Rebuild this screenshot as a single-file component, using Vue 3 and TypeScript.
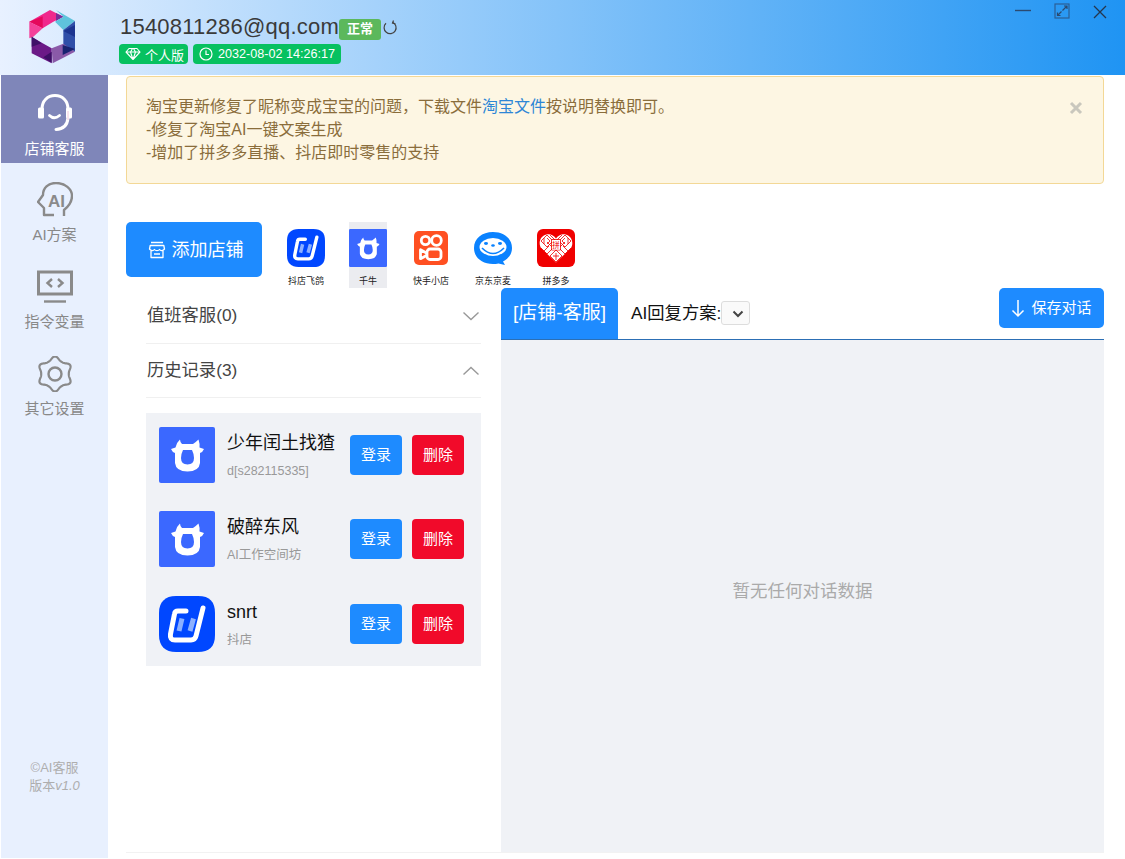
<script setup lang="ts">
const gearPath = (() => {
  const pts: string[] = []
  for (let i = 0; i < 120; i++) {
    const t = (i / 120) * Math.PI * 2
    const r = 15.4 + 1.9 * Math.cos(6 * t) + 0.3 * Math.cos(12 * t)
    pts.push(`${(18 + r * Math.sin(t)).toFixed(2)} ${(18 - r * Math.cos(t)).toFixed(2)}`)
  }
  return 'M' + pts.join('L') + 'Z'
})()

const navItems = [
  { key: 'kefu', label: '店铺客服', active: true },
  { key: 'ai', label: 'AI方案', active: false },
  { key: 'cmd', label: '指令变量', active: false },
  { key: 'gear', label: '其它设置', active: false },
]

const platforms = [
  { key: 'dd', label: '抖店飞鸽', icon: '#i-dd', cls: 'p-dd', active: false },
  { key: 'qn', label: '千牛', icon: '#i-qn', cls: 'p-qn', active: true },
  { key: 'ks', label: '快手小店', icon: '#i-ks', cls: 'p-ks', active: false },
  { key: 'jd', label: '京东京麦', icon: '#i-jd', cls: 'p-jd', active: false },
  { key: 'pdd', label: '拼多多', icon: '#i-pdd', cls: 'p-pdd', active: false },
]

const history = [
  { name: '少年闰土找猹', sub: 'd[s282115335]', icon: '#i-qn', h: 84 },
  { name: '破醉东风', sub: 'AI工作空间坊', icon: '#i-qn', h: 85 },
  { name: 'snrt', sub: '抖店', icon: '#i-dd', h: 70 },
]
</script>

<template>
  <div class="page">
    <svg class="defs" width="0" height="0" aria-hidden="true">
      <symbol id="i-dd" viewBox="0 0 56 56">
        <path d="M17 0H39C51 0 56 6 56 17V39C56 51 50 56 39 56H17C6 56 0 50 0 39V17C0 6 6 0 17 0Z" fill="#0047ff" />
        <path d="M27 15H19Q16 15 15.500 18L11.500 38Q10.500 44 16 44H32Q36 44 37 40L44 12" fill="none" stroke="#fff" stroke-width="5" stroke-linecap="round" stroke-linejoin="round" />
        <path d="M23 22.500L20 35M34.500 22.500L31 35" fill="none" stroke="#8cb0ff" stroke-width="5" />
      </symbol>
      <symbol id="i-qn" viewBox="0 0 56 56">
        <rect width="56" height="56" rx="2" fill="#3b68ff" />
        <path fill="#fff" fill-rule="evenodd" d="M21 12.500Q21 15 23 17H34Q37 15 39.500 12.500Q41 17 40.500 20.500L45 22Q43.500 25.500 41 26V36Q40 44.500 28.500 44.500Q17 44.500 16 36V26Q13.500 25.500 12 22L16.500 20.500Q17.500 15.500 21 12.500ZM24 23Q22 27 22 31Q22 37.500 28.500 37.500Q35 37.500 35 31Q35 27 33 23Z" />
      </symbol>
      <symbol id="i-ks" viewBox="0 0 34 34">
        <rect width="34" height="34" rx="5" fill="#ff5022" />
        <g fill="none" stroke="#fff" stroke-width="2.800">
          <circle cx="11.500" cy="9.500" r="4.200" />
          <circle cx="22.500" cy="9.500" r="4.800" />
          <rect x="13" y="18" width="14" height="10.500" rx="3" />
          <path d="M12.500 22L6.500 18.800V27.700L12.500 24.500" stroke-linejoin="round" />
        </g>
      </symbol>
      <symbol id="i-jd" viewBox="0 0 38 38">
        <path d="M19 3C30 3 38 9.500 38 19C38 25 34.500 30 29 32.500L31 36L24.500 34.500C22.500 35 21 35 19 35C8 35 0 28.500 0 19C0 9.500 8 3 19 3Z" fill="#0a82ff" />
        <ellipse cx="19" cy="18" rx="13.500" ry="9" fill="#fff" />
        <ellipse cx="12" cy="14.500" rx="2" ry="1.400" fill="#0a82ff" />
        <ellipse cx="26" cy="14.500" rx="2" ry="1.400" fill="#0a82ff" />
        <ellipse cx="19" cy="16.500" rx="1.800" ry="1.200" fill="#0a82ff" />
        <path d="M8 19Q19 30 30 19" fill="none" stroke="#0a82ff" stroke-width="1.600" />
      </symbol>
      <symbol id="i-pdd" viewBox="0 0 38 38">
        <rect width="38" height="38" rx="6" fill="#f00000" />
        <path d="M19 33.500L4.500 19.500C1 15.500 2.500 7 9.500 5.500C13.500 4.800 17 6.500 19 9.500C21 6.500 24.500 4.800 28.500 5.500C35.500 7 37 15.500 33.500 19.500Z" fill="#fff" />
        <g fill="none" stroke="#f00000" stroke-width="0.800">
          <path d="M4 12L10 6L16 12L10 18ZM22 12L28 6L34 12L28 18ZM4 19L10 25L16 19L10 13M34 19L28 25L22 19L28 13M13 27L19 21L25 27L19 33Z" />
          <path d="M7 9V15M31 9V15M10 9L13 12L10 15M28 9L25 12L28 15M7 22L12 17M31 22L26 17M16 27L22 27M19 24V31M13 6L19 12L25 6" />
          <path d="M14.500 10.500H23.500V21H14.500Z" />
        </g>
        <rect x="15" y="11" width="8" height="9.500" fill="#fff" />
        <text x="19" y="19" class="pdd-t">拼</text>
      </symbol>
    </svg>

    <header class="top">
      <div class="logo-cell">
        <svg class="logo" width="66" height="66" viewBox="0 0 198 198">
          <polygon points="28,50 90,15 130,35 100,50 68,70" fill="#f0288c" />
          <polygon points="28,50 68,34 68,70" fill="#e5085c" />
          <polygon points="108,24 130,35 108,48" fill="#7a2a98" />
          <polygon points="28,50 28,100 40,95 68,70" fill="#f4419a" />
          <polygon points="108,15 165,48 130,75 105,50 130,35" fill="#5fc3dc" />
          <polygon points="165,48 165,140 130,120 130,75" fill="#2f4ea8" />
          <polygon points="165,60 165,96 130,78" fill="#1c3490" />
          <polygon points="165,140 98,175 95,130 130,116" fill="#8a5aa8" />
          <polygon points="128,120 165,132 128,150" fill="#18226f" />
          <polygon points="35,95 35,145 95,175 95,130 68,115" fill="#6b1a87" />
          <polygon points="35,95 35,125 65,115" fill="#3f1168" />
          <polygon points="70,157 95,140 95,173" fill="#3e0f66" />
        </svg>
      </div>
      <div class="acct">
        <div class="acct-line">
          <span class="email">1540811286@qq.com</span>
          <span class="ok">正常</span>
          <svg class="refresh" width="16" height="16" viewBox="0 0 16 16">
            <path d="M10.500 2.200A6 6 0 1 1 4 3.300" fill="none" stroke="#444" stroke-width="1.200" />
            <path d="M11.500 0.500L10.500 3.200L13.500 4" fill="none" stroke="#444" stroke-width="1.200" />
          </svg>
        </div>
        <div class="tags">
          <span class="tag tag-a">
            <svg width="16" height="14" viewBox="0 0 16 14">
              <path d="M4 1.500H12L15 5L8 12.500L1 5ZM1 5H15M5.500 5L8 12.500L10.500 5L8.500 1.500H7.500Z" fill="none" stroke="#fff" stroke-width="1.100" stroke-linejoin="round" />
            </svg>
            个人版
          </span>
          <span class="tag tag-b">
            <svg width="14" height="14" viewBox="0 0 14 14">
              <circle cx="7" cy="7" r="6" fill="none" stroke="#fff" stroke-width="1.200" />
              <path d="M7 3.500V7.500H10" fill="none" stroke="#fff" stroke-width="1.200" />
            </svg>
            2032-08-02 14:26:17
          </span>
        </div>
      </div>
      <div class="win">
        <svg width="16" height="16" viewBox="0 0 16 16"><path d="M0 7.500H16" stroke="#2b4a70" stroke-width="1.400" /></svg>
        <svg width="16" height="16" viewBox="0 0 16 16">
          <rect x="1" y="1" width="14" height="14" fill="none" stroke="#2b5f96" stroke-width="1.200" />
          <path d="M8.500 7.500L13 3M10 3H13V6M7.500 8.500L3.500 12.500M3.500 9.500V12.500H6.500" fill="none" stroke="#2b4a70" stroke-width="1.200" />
        </svg>
        <svg width="14" height="14" viewBox="0 0 14 14"><path d="M1 1L13 13M13 1L1 13" stroke="#25364d" stroke-width="1.300" /></svg>
      </div>
    </header>

    <div class="shell">
      <aside class="side">
        <div v-for="item in navItems" :key="item.key" class="nav" :class="{ on: item.active }">
          <svg v-if="item.key === 'kefu'" width="38" height="38" viewBox="0 0 38 38">
            <path d="M6 15C6 7 11.500 1.500 19 1.500C26.500 1.500 32 7 32 15" fill="none" stroke="#fff" stroke-width="3" />
            <rect x="2" y="13.500" width="6" height="11" rx="1.500" fill="#fff" />
            <rect x="30" y="13.500" width="6" height="11" rx="1.500" fill="#fff" />
            <path d="M13.500 21.500Q18 26 23.500 21.500" fill="none" stroke="#fff" stroke-width="2.800" stroke-linecap="round" />
            <path d="M32 24Q31 35 20 35.500" fill="none" stroke="#fff" stroke-width="3" stroke-linecap="round" />
            <path d="M32 17V26" stroke="#f0c8dc" stroke-width="1" />
          </svg>
          <svg v-else-if="item.key === 'ai'" width="36" height="36" viewBox="0 0 36 36">
            <path d="M27 34V28C32 24 35 20 35 14C35 7 28 1 19 1C11 1 6 6 6 13L1 20L7 26V33H17" fill="none" stroke="#8a8a8a" stroke-width="2.400" stroke-linejoin="round" />
            <text x="11" y="25" class="ai-t">AI</text>
          </svg>
          <svg v-else-if="item.key === 'cmd'" width="36" height="36" viewBox="0 0 36 36">
            <rect x="1.500" y="3" width="33" height="22" fill="none" stroke="#8a8a8a" stroke-width="3" />
            <path d="M15 10L10.500 14L15 18M21 10L25.500 14L21 18" fill="none" stroke="#8a8a8a" stroke-width="2.400" />
            <path d="M7 32.500H29" stroke="#8a8a8a" stroke-width="2.400" />
          </svg>
          <svg v-else width="36" height="36" viewBox="0 0 36 36">
            <path :d="gearPath" fill="none" stroke="#8a8a8a" stroke-width="2.200" stroke-linejoin="round" />
            <circle cx="18" cy="18" r="6.500" fill="none" stroke="#8a8a8a" stroke-width="2.400" />
          </svg>
          <span class="nav-label">{{ item.label }}</span>
        </div>
        <div class="copy">
          <div>©AI客服</div>
          <div>版本<em>v1.0</em></div>
        </div>
      </aside>

      <main class="main">
        <section class="alert">
          <div class="alert-text">
            <div>淘宝更新修复了昵称变成宝宝的问题，下载文件<a class="lnk">淘宝文件</a>按说明替换即可。</div>
            <div>-修复了淘宝AI一键文案生成</div>
            <div>-增加了拼多多直播、抖店即时零售的支持</div>
          </div>
          <svg class="alert-x" width="14" height="14" viewBox="0 0 14 14"><path d="M2 2L12 12M12 2L2 12" stroke="#c9c7bd" stroke-width="3" /></svg>
        </section>

        <section class="tools">
          <button class="add">
            <svg width="18" height="18" viewBox="0 0 18 18">
              <path d="M3 1.500H15M2.200 4.500H15.800L16.500 8C15 10 12.500 10 11.500 8.500C10.500 10 7.500 10 6.500 8.500C5.500 10 3 10 1.500 8ZM3 10V16.500H15V10M6 13H12" fill="none" stroke="#fff" stroke-width="1.300" stroke-linejoin="round" />
            </svg>
            <span class="lift">添加店铺</span>
          </button>
          <div class="plats">
            <div v-for="p in platforms" :key="p.key" class="plat" :class="[p.cls, { on: p.active }]">
              <div class="plat-ico"><svg><use :href="p.icon" /></svg></div>
              <span class="plat-name">{{ p.label }}</span>
            </div>
          </div>
        </section>

        <section class="cols">
          <div class="left">
            <div class="coll">
              <span>值班客服(0)</span>
              <svg width="18" height="10" viewBox="0 0 18 10"><path d="M1.500 1.500L9 8.500L16.500 1.500" fill="none" stroke="#999" stroke-width="1.400" /></svg>
            </div>
            <div class="coll coll2">
              <span>历史记录(3)</span>
              <svg width="18" height="10" viewBox="0 0 18 10"><path d="M1.500 8.500L9 1.500L16.500 8.500" fill="none" stroke="#999" stroke-width="1.400" /></svg>
            </div>
            <div class="list">
              <div v-for="h in history" :key="h.name" class="row" :style="{ height: h.h + 'px' }">
                <svg class="shop" width="56" height="56"><use :href="h.icon" /></svg>
                <div class="who">
                  <div class="name">{{ h.name }}</div>
                  <div class="sub">{{ h.sub }}</div>
                </div>
                <button class="btn blue">登录</button>
                <button class="btn red">删除</button>
              </div>
            </div>
          </div>

          <div class="right">
            <div class="bar">
              <div class="tab">[店铺-客服]</div>
              <label class="plan">AI回复方案:</label>
              <span class="sel-wrap">
                <select class="sel" aria-label="AI回复方案"></select>
                <svg class="sel-arrow" width="12" height="8" viewBox="0 0 12 8"><path d="M1.500 1.500L6 6L10.500 1.500" fill="none" stroke="#444" stroke-width="2" /></svg>
              </span>
              <button class="save">
                <svg width="14" height="20" viewBox="0 0 14 20"><path d="M7 2V18M1.500 12.500L7 18L12.500 12.500" fill="none" stroke="#fff" stroke-width="1.500" /></svg>
                <span class="lift">保存对话</span>
              </button>
            </div>
            <div class="chat">暂无任何对话数据</div>
          </div>
        </section>
      </main>
    </div>
  </div>
</template>

<style scoped>
.page {
  width: 1125px;
  height: 859px;
  overflow: hidden;
  background: #fff;
  font-family: "Liberation Sans", "Noto Sans CJK SC", sans-serif;
  color: #333;
}
.defs {
  display: block;
  height: 0;
}
.pdd-t {
  font-family: "Noto Sans CJK SC", sans-serif;
  font-size: 7.500px;
  text-anchor: middle;
  fill: #f00000;
}
.top {
  height: 75px;
  display: flex;
  background: linear-gradient(to right, #e8f1ff, #1f94f3);
}
.logo-cell {
  width: 108px;
  flex: none;
  padding: 5px 0 0 20px;
  box-sizing: border-box;
}
.logo {
  display: block;
}
.acct {
  margin-left: 11px;
  padding-top: 12px;
}
.acct-line {
  display: flex;
  align-items: center;
  height: 30px;
}
.email {
  padding-left: 1px;
  font-size: 22px;
  letter-spacing: 0.22px;
  color: #3a3a3a;
  line-height: 30px;
}
.ok {
  width: 42px;
  height: 21px;
  margin-top: 5px;
  border-radius: 3px;
  background: #5cb85c;
  color: #fff;
  font-size: 13px;
  font-weight: 700;
  line-height: 20px;
  text-align: center;
}
.refresh {
  margin: 2px 0 0 1px;
}
.tags {
  display: flex;
  gap: 5px;
  margin-top: 2px;
}
.tag {
  height: 20px;
  box-sizing: border-box;
  padding-left: 6px;
  display: flex;
  align-items: center;
  gap: 5px;
  border-radius: 4px;
  background: #07c160;
  color: #fff;
  font-size: 12.600px;
}
.tag-a {
  width: 69px;
  font-size: 13px;
  gap: 4px;
}
.tag-b {
  width: 148px;
}
.win {
  margin-left: auto;
  padding: 3px 18px 0 0;
  display: flex;
  align-items: flex-start;
  gap: 23px;
}
.win svg:last-child {
  margin-top: 2px;
}
.shell {
  display: flex;
  height: 783px;
}
.side {
  width: 107px;
  margin-left: 1px;
  flex: none;
  background: #e8f0fe;
  display: flex;
  flex-direction: column;
  align-items: stretch;
}
.nav {
  height: 87px;
  box-sizing: border-box;
  padding-top: 19px;
  display: flex;
  flex-direction: column;
  align-items: center;
  color: #888;
}
.nav.on {
  height: 88px;
  background: #7f86b9;
  color: #fff;
}
.nav svg {
  flex: none;
}
.nav-label {
  margin-top: 9px;
  font-size: 15px;
  line-height: 16px;
}
.ai-t {
  font-family: "Liberation Sans", sans-serif;
  font-size: 17px;
  font-weight: 700;
  fill: #8a8a8a;
}
.copy {
  margin-top: auto;
  margin-bottom: 63px;
  text-align: center;
  font-size: 13px;
  line-height: 18px;
  color: #aeaeae;
}
.copy em {
  font-style: italic;
}
.main {
  flex: 1;
  min-width: 0;
  padding: 1px 21px 0 18px;
  display: flex;
  flex-direction: column;
}
.alert {
  height: 108px;
  box-sizing: border-box;
  flex: none;
  border: 1px solid #f3d896;
  border-radius: 4px;
  background: #fdf6e3;
  padding: 18px 19px 0;
  display: flex;
  justify-content: space-between;
  color: #8a6d3b;
  font-size: 16px;
  line-height: 23px;
}
.lnk {
  color: #2e86d6;
}
.alert-x {
  margin: 6px 1px 0 0;
}
.tools {
  display: flex;
  height: 66px;
  flex: none;
  margin-top: 38px;
}
.add {
  width: 136px;
  height: 55px;
  border: 0;
  border-radius: 5px;
  background: #1e8bff;
  color: #fff;
  font: 18px "Liberation Sans", "Noto Sans CJK SC", sans-serif;
  display: flex;
  align-items: center;
  justify-content: center;
  gap: 6px;
  padding: 0 0 0 3px;
}
.lift {
  margin-bottom: 4px;
}
.plats {
  display: flex;
  margin-left: 25px;
  gap: 24px;
}
.plat {
  width: 38px;
  height: 66px;
  display: flex;
  flex-direction: column;
  align-items: center;
}
.p-ks,
.p-pdd {
  margin-left: 1px;
}
.plat.on {
  background: #ebecf0;
}
.plat-ico {
  height: 38px;
  margin-top: 7px;
  display: flex;
  align-items: center;
  justify-content: center;
}
.plat-ico svg {
  width: 38px;
  height: 38px;
  display: block;
}
.p-ks .plat-ico svg {
  width: 34px;
  height: 34px;
}
.plat-name {
  margin-top: 9px;
  font-size: 9px;
  line-height: 10px;
  white-space: nowrap;
  color: #222;
}
.cols {
  flex: 1;
  min-height: 0;
  display: flex;
  border-bottom: 1px solid #f2f2f2;
  margin-bottom: 5px;
}
.left {
  width: 335px;
  margin-left: 20px;
  flex: none;
}
.coll {
  height: 55px;
  border-bottom: 1px solid #f0f0f0;
  display: flex;
  align-items: center;
  justify-content: space-between;
  padding: 0 0 0 1px;
  font-size: 17.300px;
  color: #444;
}
.coll span {
  margin-bottom: 4px;
}
.coll2 {
  height: 53px;
}
.coll svg {
  margin-right: 1px;
}
.list {
  margin-top: 15px;
  height: 253px;
  background: #f0f2f6;
  padding-top: 14px;
  box-sizing: border-box;
}
.row {
  display: flex;
  align-items: flex-start;
  padding-left: 13px;
}
.shop {
  flex: none;
  display: block;
}
.who {
  width: 123px;
  margin-left: 12px;
  flex: none;
}
.name {
  font-size: 18px;
  line-height: 24px;
  margin-top: 4px;
  color: #111;
}
.sub {
  font-size: 12.500px;
  line-height: 16px;
  margin-top: 8px;
  color: #999;
}
.btn {
  width: 52px;
  height: 40px;
  margin-top: 8px;
  margin-right: 10px;
  border: 0;
  border-radius: 4px;
  color: #fff;
  font: 15px "Liberation Sans", "Noto Sans CJK SC", sans-serif;
  flex: none;
  padding: 0 0 3px;
}
.blue {
  background: #1e8bff;
}
.red {
  background: #f10a2a;
}
.right {
  width: 603px;
  margin-left: 20px;
  flex: none;
  display: flex;
  flex-direction: column;
}
.bar {
  height: 52px;
  flex: none;
  display: flex;
  align-items: flex-start;
  border-bottom: 1px solid #2c6fb5;
  box-sizing: border-box;
}
.tab {
  width: 117px;
  height: 51px;
  border-radius: 5px 5px 0 0;
  background: #1e8bff;
  color: #fff;
  font-size: 19px;
  line-height: 50px;
  text-align: center;
}
.plan {
  margin-left: 13px;
  font-size: 17.300px;
  line-height: 50px;
  color: #111;
}
.sel-wrap {
  position: relative;
  width: 29px;
  height: 24px;
  margin-top: 13px;
}
.sel {
  appearance: none;
  display: block;
  width: 29px;
  height: 24px;
  margin: 0;
  padding: 0;
  border: 1px solid #ddd;
  border-radius: 3px;
  background-color: #fafafa;
}
.sel-arrow {
  position: absolute;
  left: 11px;
  top: 9px;
  pointer-events: none;
}
.save {
  width: 105px;
  height: 40px;
  margin-left: auto;
  border: 0;
  border-radius: 5px;
  background: #1e8bff;
  color: #fff;
  font: 15px "Liberation Sans", "Noto Sans CJK SC", sans-serif;
  display: flex;
  align-items: center;
  justify-content: center;
  gap: 6px;
  padding: 0;
}
.chat {
  flex: 1;
  background: #f0f2f6;
  color: #aaa;
  font-size: 17.500px;
  display: flex;
  align-items: center;
  justify-content: center;
  padding-bottom: 14px;
  box-sizing: border-box;
}
</style>
